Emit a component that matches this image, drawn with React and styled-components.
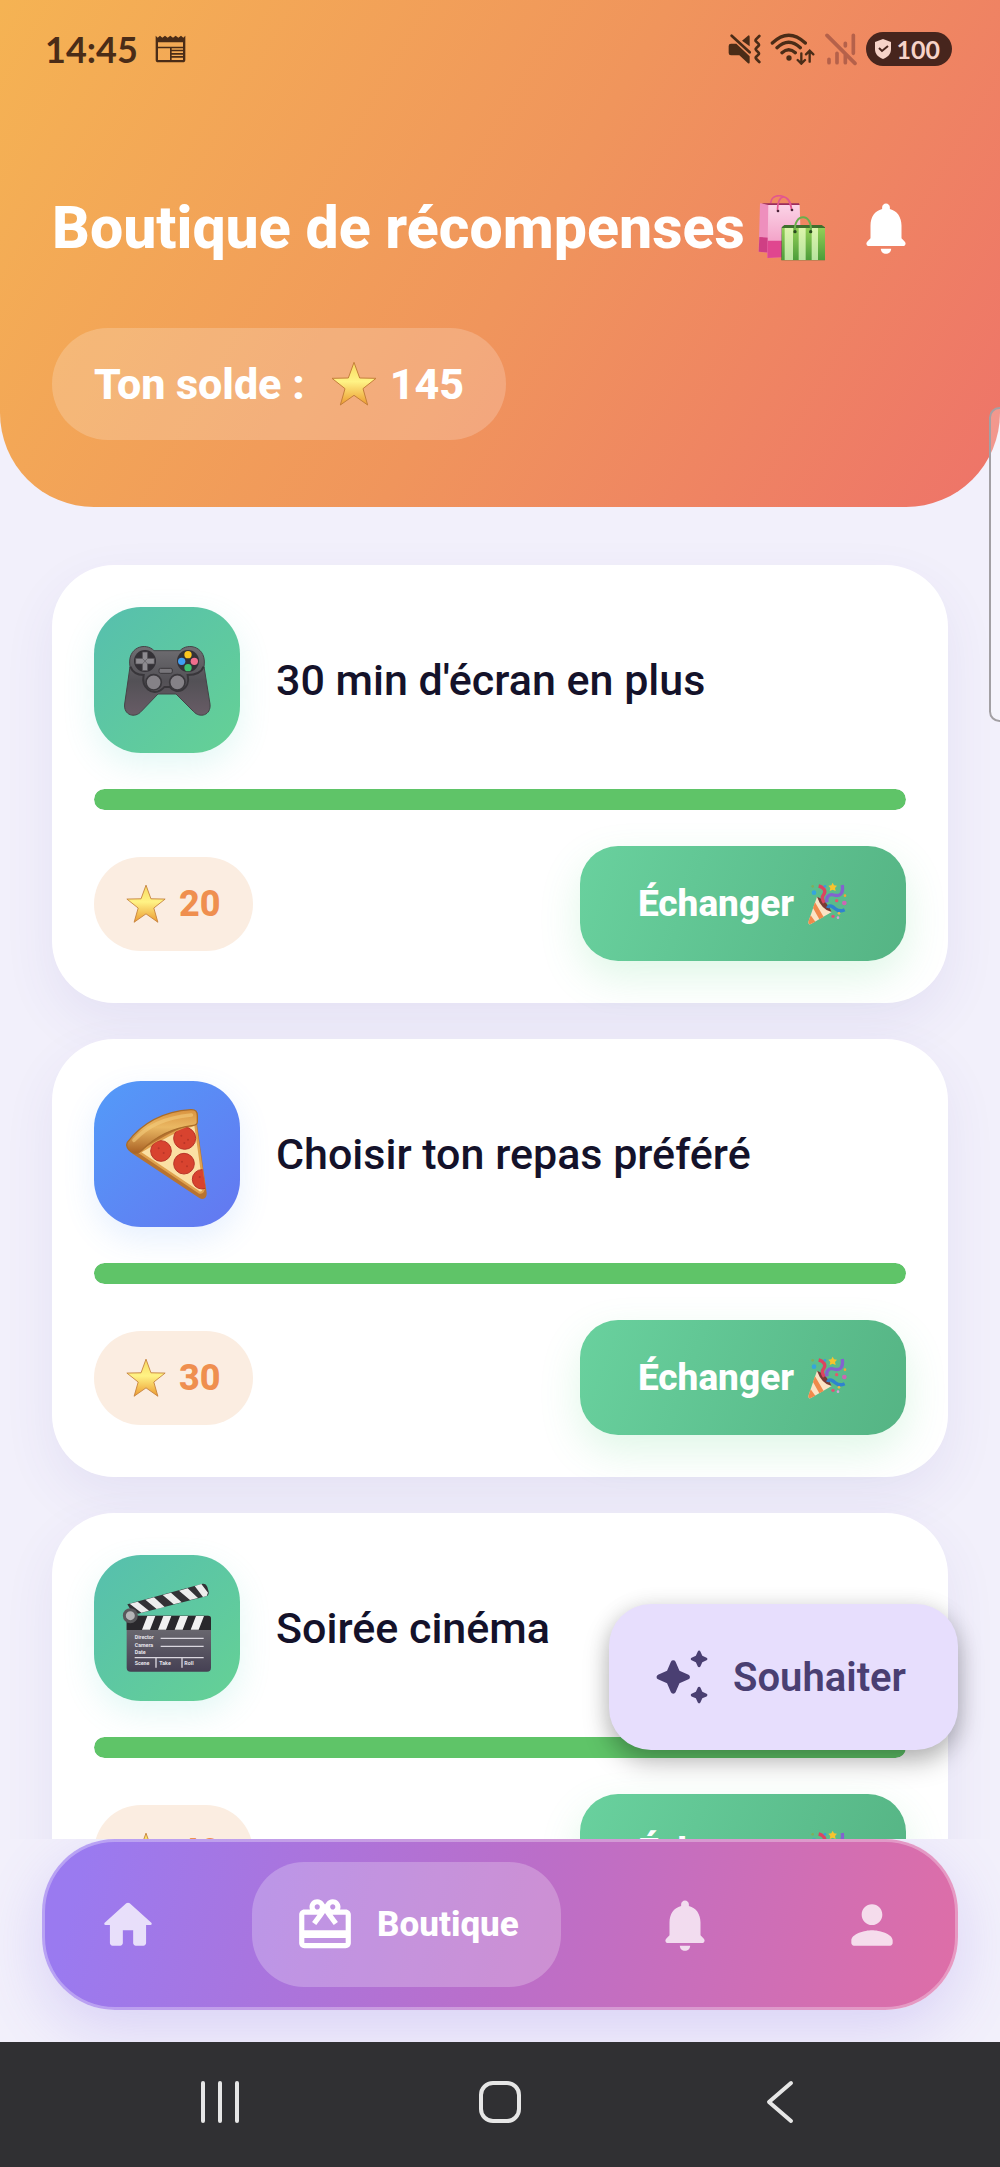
import styled, { createGlobalStyle } from "styled-components";

const GlobalStyle = createGlobalStyle`
  * {
    box-sizing: border-box;
  }

  body {
    margin: 0;
    background: #f2f0fb;
    font-family: Roboto, "Liberation Sans", sans-serif;
  }

  button {
    font-family: inherit;
    border: none;
    cursor: pointer;
  }

  svg {
    display: block;
    flex-shrink: 0;
  }
`;

const Screen = styled.div`
  height: 100vh;
  display: flex;
  flex-direction: column;
  position: relative;
  overflow: hidden;
`;

const Header = styled.header`
  padding: 32px 52px 67px;
  border-radius: 0 0 94px 94px;
  background: linear-gradient(120deg, #f5b353 0%, #f0955c 52%, #ee7369 100%);
`;

const StatusBar = styled.div`
  height: 34px;
  margin: 0 -4px 0 -7px;
  display: flex;
  align-items: center;
  justify-content: space-between;
  color: #4a2c17;
`;

const StatusGroup = styled.div`
  display: flex;
  align-items: center;
  gap: ${({ $gap }) => $gap}px;
`;

const Clock = styled.span`
  font-family: Lato, Roboto, sans-serif;
  font-size: 36px;
  font-weight: 700;
  line-height: 34px;
`;

const Battery = styled.span`
  height: 34px;
  padding: 0 12px 0 8px;
  display: flex;
  align-items: center;
  gap: 4px;
  border-radius: 17px;
  background: #47251d;
  color: #f6d3c8;
  font-family: Lato, Roboto, sans-serif;
  font-size: 25px;
  font-weight: 700;
  line-height: 34px;
`;

const TitleRow = styled.div`
  margin-top: 120px;
  padding-right: 31px;
  display: flex;
  align-items: center;
  justify-content: space-between;
`;

const Title = styled.h1`
  margin: 0;
  display: flex;
  align-items: center;
  gap: 13px;
  font-size: 59px;
  font-weight: 800;
  line-height: 84px;
  color: #fff;
  white-space: nowrap;
`;

const IconButton = styled.button`
  padding: 0;
  background: none;
  color: #fff;
`;

const Balance = styled.div`
  width: fit-content;
  height: 112px;
  margin-top: 58px;
  padding: 0 42px;
  display: flex;
  align-items: center;
  border-radius: 56px;
  background: rgba(255, 255, 255, 0.2);
  color: #fff;
  font-size: 43px;
  font-weight: 800;
  white-space: nowrap;
`;

const BalanceValue = styled.span`
  margin-left: 26px;
  display: flex;
  align-items: center;
  gap: 13px;
`;

const RewardList = styled.ul`
  flex: 1;
  min-height: 0;
  margin: 0;
  padding: 58px 52px;
  display: flex;
  flex-direction: column;
  gap: 36px;
  list-style: none;
  overflow-y: auto;
  scrollbar-width: none;
`;

const Card = styled.li`
  flex-shrink: 0;
  padding: 42px;
  display: flex;
  flex-direction: column;
  gap: 36px;
  border-radius: 62px;
  background: #fff;
  box-shadow: 0 20px 52px rgba(80, 60, 160, 0.08);
`;

const CardHead = styled.div`
  display: flex;
  align-items: center;
  gap: 36px;
`;

const Tile = styled.div`
  width: 146px;
  height: 146px;
  display: flex;
  align-items: center;
  justify-content: center;
  border-radius: 47px;
  background: ${({ $blue }) =>
    $blue
      ? "linear-gradient(135deg, #539bf9, #6477f0)"
      : "linear-gradient(135deg, #56bfae, #65d195)"};
  box-shadow: 0 12px 32px
    ${({ $blue }) =>
      $blue ? "rgba(80, 150, 250, 0.14)" : "rgba(80, 210, 190, 0.16)"};
`;

const RewardName = styled.h2`
  margin: 0;
  font-size: 43px;
  font-weight: 500;
  color: #14122a;
`;

const Track = styled.div`
  height: 21px;
  border-radius: 11px;
  background: #e8e8ee;
  overflow: hidden;
`;

const Fill = styled.div`
  height: 100%;
  border-radius: 11px;
  background: #5fc468;
`;

const CardFoot = styled.div`
  display: flex;
  align-items: center;
  justify-content: space-between;
`;

const Price = styled.span`
  height: 94px;
  padding: 0 32px;
  display: flex;
  align-items: center;
  gap: 13px;
  border-radius: 47px;
  background: #fbede1;
  color: #ef8f4f;
  font-size: 36px;
  font-weight: 800;
`;

const ExchangeButton = styled.button`
  height: 115px;
  padding: 0 58px;
  display: flex;
  align-items: center;
  gap: 13px;
  border-radius: 38px;
  background: linear-gradient(110deg, #69d19e, #55b484);
  box-shadow: 0 16px 40px rgba(80, 210, 120, 0.18);
  color: #fff;
  font-size: 37px;
  font-weight: 800;
`;

const BottomArea = styled.div`
  position: relative;
  padding: 0 42px 32px;
  background: #f2f0fb;
  overflow: hidden;
`;

const NavBar = styled.nav`
  height: 171px;
  padding: 0 20px;
  display: flex;
  align-items: center;
  justify-content: space-between;
  border: 3px solid rgba(255, 255, 255, 0.3);
  border-radius: 73px;
  background: linear-gradient(105deg, #9a7af0 5%, #bb6ec9 52%, #dd6ea8 98%)
    border-box;
  box-shadow: 0 20px 60px rgba(120, 90, 230, 0.2);
`;

const NavItem = styled.a`
  height: 125px;
  padding: ${({ $active }) => ($active ? "0 42px" : "0 32px")};
  display: flex;
  align-items: center;
  gap: 21px;
  border-radius: 52px;
  background: ${({ $active }) =>
    $active ? "rgba(255, 255, 255, 0.24)" : "none"};
  color: ${({ $active }) => ($active ? "#fff" : "rgba(255, 255, 255, 0.76)")};
  font-size: 35px;
  font-weight: 800;
  text-decoration: none;
`;

const WishButton = styled.button`
  position: absolute;
  right: 42px;
  bottom: 417px;
  height: 146px;
  padding: 0 52px 0 41px;
  display: flex;
  align-items: center;
  gap: 21px;
  border-radius: 42px;
  background: #e7defd;
  box-shadow: 0 12px 26px rgba(0, 0, 0, 0.26), 0 2px 22px rgba(0, 0, 0, 0.1);
  color: #4a3f72;
  font-size: 40px;
  font-weight: 600;
`;

const EdgeHandle = styled.div`
  position: absolute;
  top: 407px;
  right: -10px;
  width: 21px;
  height: 315px;
  border: 2px solid #a3a0a4;
  border-radius: 12px;
  background: rgba(255, 255, 255, 0.25);
`;

const SystemBar = styled.div`
  height: 125px;
  padding: 0 190px 5px;
  display: flex;
  align-items: center;
  justify-content: space-between;
  background: #303033;
`;

const SystemButton = styled.button`
  width: 60px;
  height: 60px;
  padding: 0;
  display: flex;
  align-items: center;
  justify-content: center;
  background: none;
  color: #e6e6e6;
`;

const iconPaths = {
  home: "M10 19v-5h4v5c0 .55.45 1 1 1h3c.55 0 1-.45 1-1v-7h1.7c.46 0 .68-.57.33-.87L12.67 3.6c-.38-.34-.96-.34-1.34 0l-8.36 7.53c-.34.3-.13.87.33.87H5v7c0 .55.45 1 1 1h3c.55 0 1-.45 1-1z",
  bell: "M12 22c1.1 0 2-.9 2-2h-4c0 1.1.89 2 2 2zm6-6v-5c0-3.07-1.64-5.64-4.5-6.32V4c0-.83-.67-1.5-1.5-1.5s-1.5.67-1.5 1.5v.68C7.63 5.36 6 7.92 6 11v5l-1.29 1.29c-.63.63-.19 1.71.7 1.71h13.17c.89 0 1.34-1.08.71-1.71L18 16z",
  person:
    "M12 12c2.21 0 4-1.79 4-4s-1.79-4-4-4-4 1.79-4 4 1.79 4 4 4zm0 2c-2.67 0-8 1.34-8 4v1c0 .55.45 1 1 1h14c.55 0 1-.45 1-1v-1c0-2.66-5.33-4-8-4z",
  gift: "M20 6h-2.18c.11-.31.18-.65.18-1 0-1.66-1.34-3-3-3-1.05 0-1.96.54-2.5 1.35l-.5.67-.5-.68C10.96 2.54 10.05 2 9 2 7.34 2 6 3.34 6 5c0 .35.07.69.18 1H4c-1.11 0-1.99.89-1.99 2L2 19c0 1.11.89 2 2 2h16c1.11 0 2-.89 2-2V8c0-1.11-.89-2-2-2zm-5-2c.55 0 1 .45 1 1s-.45 1-1 1-1-.45-1-1 .45-1 1-1zM9 4c.55 0 1 .45 1 1s-.45 1-1 1-1-.45-1-1 .45-1 1-1zm11 15H4v-2h16v2zm0-5H4V8h5.08L7 10.83 8.62 12 11 8.76l1-1.36 1 1.36L15.38 12 17 10.83 14.92 8H20v6z",
  sparkles:
    "M8.1 6.1a1 1 0 0 1 1.8 0l1.5 3.5 3.5 1.5a1 1 0 0 1 0 1.8l-3.5 1.5-1.5 3.5a1 1 0 0 1-1.8 0l-1.5-3.5-3.5-1.5a1 1 0 0 1 0-1.8l3.5-1.5zM18.5 2.1a.55.55 0 0 1 1 0l.75 1.65 1.65.75a.55.55 0 0 1 0 1l-1.65.75-.75 1.65a.55.55 0 0 1-1 0l-.75-1.65-1.65-.75a.55.55 0 0 1 0-1l1.65-.75zM18.5 16.1a.55.55 0 0 1 1 0l.75 1.65 1.65.75a.55.55 0 0 1 0 1l-1.65.75-.75 1.65a.55.55 0 0 1-1 0l-.75-1.65-1.65-.75a.55.55 0 0 1 0-1l1.65-.75z",
};

function Icon({ name }) {
  return (
    <svg width="62" height="62" viewBox="0 0 24 24" fill="currentColor">
      <path d={iconPaths[name]} />
    </svg>
  );
}

function NewsIcon() {
  return (
    <svg width="31" height="28" viewBox="0 0 93 84" fill="currentColor">
      <path
        fillRule="evenodd"
        d="M2 2l6 6 7-6 7 6 8-6 8 6 8-6 8 6 8-6 8 6 8-6 7 6 6-6v72q0 8-8 8H10q-8 0-8-8zM9 22v13h75V22zM9 40v35h36V40zM50 40v4h34v-4zM50 49v5h34v-5zM50 59v4h34v-4zM50 68v7h34v-7z"
      />
    </svg>
  );
}

function MuteIcon() {
  return (
    <svg width="33" height="30" viewBox="82 101 99 90">
      <path
        fill="currentColor"
        d="M84 137q0-7 7-7h16l40 38v18q0 5-5 3l-26-24H91q-7 0-7-7zM124 121l18-15q5-3 5 4v28z"
      />
      <path
        d="M93 106l54 50M176 107l-10 10q-3 4 1 7l6 6q4 4 0 7l-6 6q-4 3 0 7l6 6q4 4 0 7l-6 6q-4 3 0 7l9 9"
        fill="none"
        stroke="currentColor"
        strokeWidth="8"
        strokeLinecap="round"
      />
    </svg>
  );
}

function WifiIcon() {
  return (
    <svg
      width="46"
      height="32"
      viewBox="208 97 138 96"
      fill="none"
      stroke="currentColor"
      strokeWidth="10"
      strokeLinecap="round"
    >
      <path d="M215 127q49-47 99 0M229 141q35-33 70 0M244 156q20-18 40 0" />
      <circle cx="265" cy="172" r="8" fill="currentColor" stroke="none" />
      <path
        d="M302 158v30M291 178l11 11 11-11M327 183v-31M316 161l11-11 11 11"
        strokeWidth="7"
      />
    </svg>
  );
}

function NoSignalIcon() {
  return (
    <svg
      width="32"
      height="33"
      viewBox="372 97 96 99"
      fill="none"
      stroke="#b5614a"
      strokeWidth="11"
      strokeLinecap="round"
    >
      <path d="M384 176v10M408 158v28M433 128v8M433 162v24M457 104v54M378 104l84 84" />
    </svg>
  );
}

function ShieldIcon() {
  return (
    <svg width="18" height="20" viewBox="0 0 18 20">
      <path d="M9 0l8 3v7c0 5-3 8-8 10-5-2-8-5-8-10V3z" fill="#f6d3c8" />
      <path d="M5 9l3 3 6-5" fill="none" stroke="#47251d" strokeWidth="2" />
    </svg>
  );
}

function StarEmoji({ size }) {
  return (
    <svg width={size} height={size} viewBox="0 0 138 138">
      <defs>
        <linearGradient id="star" x1="0" y1="0" x2="0" y2="1">
          <stop offset="0" stopColor="#f7d860" />
          <stop offset="0.45" stopColor="#fff385" />
          <stop offset="1" stopColor="#ec9a30" />
        </linearGradient>
      </defs>
      <path
        d="M69 4l17 47 49 1-39 31 14 49-41-29-41 29 14-49L3 52l49-1z"
        fill="url(#star)"
        stroke="#c47f3a"
        strokeWidth="3"
        strokeLinejoin="round"
      />
    </svg>
  );
}

function BagsEmoji() {
  return (
    <svg width="68" height="66" viewBox="167 74 204 198">
      <defs>
        <linearGradient id="pinkBag" x1="0" y1="0" x2="0" y2="1">
          <stop offset="0" stopColor="#fbd3e6" />
          <stop offset="1" stopColor="#f08dbb" />
        </linearGradient>
        <linearGradient id="greenBag" x1="0" y1="0" x2="0" y2="1">
          <stop offset="0" stopColor="#dcf5ac" />
          <stop offset="1" stopColor="#b8e3a0" />
        </linearGradient>
        <linearGradient id="greenStripe" x1="0" y1="0" x2="0" y2="1">
          <stop offset="0" stopColor="#93cf57" />
          <stop offset="1" stopColor="#4c9d3a" />
        </linearGradient>
      </defs>
      <path d="M173 99l32 4-5 144-31-3z" fill="#ee8fbd" />
      <path d="M171 200l29 2v45l-31-3z" fill="#cf3f84" />
      <path d="M178 99h112l2 6H202z" fill="#9c2c5c" />
      <path d="M198 104h94l2 62-52 4-3 90-44 3z" fill="url(#pinkBag)" />
      <path d="M196 211h43v50l-44 2z" fill="#e0468f" />
      <path
        d="M205 98c2-30 48-29 58 2l6 20M226 122c-4-55 38-56 42-2"
        fill="none"
        stroke="#e2568f"
        strokeWidth="5"
      />
      <path d="M238 171l8-7h112l10 7v99H237z" fill="#406f2e" />
      <path d="M239 173h129v96H239z" fill="url(#greenBag)" />
      <path
        d="M239 173h8v96h-8zM272 173h17v96h-17zM310 173h18v96h-18zM347 173h21v96h-21z"
        fill="url(#greenStripe)"
      />
      <path
        d="M278 186c-6-60 55-60 47 0"
        fill="none"
        stroke="#6aae4c"
        strokeWidth="6"
      />
      <g fill="#4c2339">
        <circle cx="227" cy="122" r="4" />
        <circle cx="269" cy="119" r="4" />
      </g>
      <g fill="#29491d">
        <circle cx="278" cy="184" r="5" />
        <circle cx="325" cy="184" r="5" />
      </g>
    </svg>
  );
}

function GamepadEmoji() {
  return (
    <svg width="88" height="72" viewBox="126 164 264 216">
      <defs>
        <linearGradient id="padBody" x1="0" y1="0" x2="0" y2="1">
          <stop offset="0" stopColor="#6f6e72" />
          <stop offset="0.5" stopColor="#535156" />
          <stop offset="1" stopColor="#685c66" />
        </linearGradient>
      </defs>
      <path
        d="M147 232c-10-60 48-74 72-48h78c24-26 82-12 72 48l18 112c4 34-31 44-50 22l-52-52h-54l-50 52c-19 22-54 12-50-22z"
        fill="url(#padBody)"
        stroke="#454347"
        strokeWidth="3"
      />
      <path
        d="M148 232c8 20 24 25 40 25-8 40 26 60 50 46q8-5 12-10h16c20 26 64 8 54-36 20 0 40-5 48-25"
        fill="none"
        stroke="#38363a"
        strokeWidth="6"
      />
      <circle cx="192" cy="215" r="33" fill="#343237" />
      <circle cx="321" cy="215" r="33" fill="#343237" />
      <path
        d="M184 188h16v19h20v17h-20v20h-16v-20h-20v-17h20z"
        fill="#8d8b90"
        stroke="#4c4a4f"
        strokeWidth="2"
      />
      <path d="M184 207l16 17M200 207l-16 17" stroke="#59575c" strokeWidth="2" />
      <circle cx="321" cy="196" r="11" fill="#fbc51e" />
      <circle cx="302" cy="216" r="11" fill="#3f9ff2" />
      <circle cx="340" cy="216" r="11" fill="#ef6f8d" />
      <circle cx="321" cy="235" r="11" fill="#3fc06c" />
      <rect
        x="234"
        y="237"
        width="40"
        height="15"
        rx="5"
        fill="#77757a"
        stroke="#3a383c"
        strokeWidth="3"
      />
      <g fill="#858287" stroke="#3a383c" strokeWidth="5">
        <circle cx="218" cy="279" r="23" />
        <circle cx="289" cy="279" r="23" />
      </g>
    </svg>
  );
}

function PizzaEmoji() {
  return (
    <svg width="84" height="93" viewBox="129 145 252 279">
      <defs>
        <linearGradient id="crust" x1="0" y1="0" x2="0" y2="1">
          <stop offset="0" stopColor="#d9923f" />
          <stop offset="0.4" stopColor="#eab863" />
          <stop offset="1" stopColor="#a85f22" />
        </linearGradient>
        <clipPath id="slice">
          <path d="M172 278c52-30 100-64 168-84l30 186c1 12-5 22-15 18z" />
        </clipPath>
      </defs>
      <path
        d="M143 266l200-88 31 222c1 13-9 23-22 15L152 282z"
        fill="#b87330"
      />
      <path
        d="M172 278c52-30 100-64 168-84l26 186c1 12-5 22-15 18z"
        fill="#fbe0a4"
        stroke="#dfa14e"
        strokeWidth="7"
      />
      <g clipPath="url(#slice)">
        <g fill="#d8432f" stroke="#b8362a" strokeWidth="3">
          <circle cx="308" cy="236" r="33" />
          <circle cx="237" cy="274" r="31" />
          <circle cx="306" cy="312" r="31" />
          <circle cx="360" cy="359" r="29" />
        </g>
        <g fill="#b93528">
          <circle cx="298" cy="228" r="3" />
          <circle cx="318" cy="240" r="3" />
          <circle cx="307" cy="250" r="3" />
          <circle cx="230" cy="266" r="3" />
          <circle cx="245" cy="280" r="3" />
          <circle cx="300" cy="306" r="3" />
          <circle cx="315" cy="320" r="3" />
          <circle cx="353" cy="352" r="3" />
        </g>
      </g>
      <path
        d="M136 248c42-54 100-92 190-98 16-1 20 7 20 18v18c0 8-4 10-12 11-68 8-116 36-156 76-8 9-18 12-30 4-11-7-17-20-12-29z"
        fill="url(#crust)"
        stroke="#a96c2a"
        strokeWidth="4"
      />
      <path
        d="M156 242c40-42 90-68 172-76"
        fill="none"
        stroke="#f3cb7c"
        strokeWidth="11"
        strokeLinecap="round"
        opacity="0.6"
      />
    </svg>
  );
}

function ClapperEmoji() {
  return (
    <svg width="90" height="90" viewBox="124 160 270 270">
      <defs>
        <linearGradient id="slate" x1="0" y1="0" x2="0" y2="1">
          <stop offset="0" stopColor="#747377" />
          <stop offset="1" stopColor="#454053" />
        </linearGradient>
      </defs>
      <path
        d="M140 224l226-62q10-1 14 10l4 14q2 10-8 14l-204 52q-10-10-20-8z"
        fill="#333236"
      />
      <path
        d="M147 222l24-6 34 27-23 6zM194 210l26-7 32 29-24 6zM246 196l25-7 32 29-24 6zM295 183l26-7 31 29-24 6zM342 169l20-6 20 26-4 10-11 3z"
        fill="#ededed"
      />
      <path
        d="M138 258h244q9 0 9 9v147q0 12-12 12H150q-12 0-12-12z"
        fill="url(#slate)"
      />
      <path d="M138 258h244q9 0 9 9v34H138z" fill="#29282c" />
      <path
        d="M200 259h24l-16 41h-24zM248 259h24l-16 41h-24zM298 259h24l-16 41h-24zM346 259h24l-16 41h-24z"
        fill="#f1f1f1"
      />
      <circle
        cx="149"
        cy="258"
        r="18"
        fill="#b5b5b7"
        stroke="#59595c"
        strokeWidth="9"
      />
      <path
        d="M240 326h129M240 350h129M162 384h207M226 384v30M304 384v30"
        stroke="#dad7df"
        strokeWidth="4"
      />
      <g
        fill="#e6e3ea"
        fontFamily="Roboto, sans-serif"
        fontSize="16"
        fontWeight="700"
      >
        <text x="162" y="327">
          Director
        </text>
        <text x="162" y="351">
          Camera
        </text>
        <text x="162" y="374">
          Date
        </text>
        <text x="162" y="406">
          Scene
        </text>
        <text x="236" y="406">
          Take
        </text>
        <text x="311" y="406">
          Roll
        </text>
      </g>
    </svg>
  );
}

function PartyEmoji() {
  return (
    <svg width="41" height="43" viewBox="740 190 123 129">
      <path d="M770 234l44 46-62 36q-9 4-8-6z" fill="#fbe3c4" />
      <path
        d="M764 251l26 44-13 7-19-34zM751 290l14 19-14 7q-8 2-7-6z"
        fill="#f08a4b"
      />
      <path d="M770 234q28 9 44 46-30-6-44-46z" fill="#7a3a35" />
      <path
        d="M775 202c18 4 22 18 15 26s-4 16 2 24"
        fill="none"
        stroke="#dc4560"
        strokeWidth="10"
      />
      <path
        d="M846 199c4 32-12 34-26 30s-24 6-20 22"
        fill="none"
        stroke="#8363cf"
        strokeWidth="10"
      />
      <path
        d="M802 268c4-14 18-2 24 3s17 7 27 2"
        fill="none"
        stroke="#2f83cf"
        strokeWidth="10"
      />
      <path
        d="M817 192l4 8 9 1-6 7 2 9-9-4-9 4 2-9-6-7 9-1z"
        fill="#f8c42d"
      />
      <circle cx="761" cy="222" r="7" fill="#35a6dd" />
      <circle cx="794" cy="203" r="4" fill="#3a9bdc" />
      <circle cx="829" cy="246" r="5" fill="#e5556e" />
      <circle cx="852" cy="253" r="7" fill="#cc67b5" />
      <circle cx="854" cy="231" r="4" fill="#f3a932" />
      <circle cx="757" cy="203" r="4" fill="#7fae5c" />
      <circle cx="818" cy="293" r="5" fill="#e34f76" />
      <circle cx="833" cy="297" r="4" fill="#d9a0d8" />
      <circle cx="836" cy="284" r="4" fill="#efb34a" />
    </svg>
  );
}

const rewards = [
  { name: "30 min d'écran en plus", price: 20, emoji: <GamepadEmoji /> },
  { name: "Choisir ton repas préféré", price: 30, emoji: <PizzaEmoji />, blue: true },
  { name: "Soirée cinéma", price: 40, emoji: <ClapperEmoji /> },
];

const balance = 145;

function RewardCard({ reward }) {
  const progress = Math.min(100, (balance / reward.price) * 100);

  return (
    <Card>
      <CardHead>
        <Tile $blue={reward.blue}>{reward.emoji}</Tile>
        <RewardName>{reward.name}</RewardName>
      </CardHead>
      <Track role="progressbar" aria-label={reward.name} aria-valuenow={progress}>
        <Fill style={{ width: `${progress}%` }} />
      </Track>
      <CardFoot>
        <Price>
          <StarEmoji size={40} />
          {reward.price}
        </Price>
        <ExchangeButton type="button">
          Échanger
          <PartyEmoji />
        </ExchangeButton>
      </CardFoot>
    </Card>
  );
}

function App() {
  return (
    <>
      <GlobalStyle />
      <Screen>
        <Header>
          <StatusBar>
            <StatusGroup $gap={17}>
              <Clock>14:45</Clock>
              <NewsIcon />
            </StatusGroup>
            <StatusGroup $gap={9}>
              <MuteIcon />
              <WifiIcon />
              <NoSignalIcon />
              <Battery>
                <ShieldIcon />
                100
              </Battery>
            </StatusGroup>
          </StatusBar>
          <TitleRow>
            <Title>
              Boutique de récompenses
              <BagsEmoji />
            </Title>
            <IconButton type="button" aria-label="Notifications">
              <Icon name="bell" />
            </IconButton>
          </TitleRow>
          <Balance>
            Ton solde :
            <BalanceValue>
              <StarEmoji size={46} />
              {balance}
            </BalanceValue>
          </Balance>
        </Header>

        <RewardList>
          {rewards.map((reward) => (
            <RewardCard key={reward.name} reward={reward} />
          ))}
        </RewardList>

        <BottomArea>
          <NavBar>
            <NavItem href="#accueil" aria-label="Accueil">
              <Icon name="home" />
            </NavItem>
            <NavItem href="#boutique" $active>
              <Icon name="gift" />
              Boutique
            </NavItem>
            <NavItem href="#notifications" aria-label="Notifications">
              <Icon name="bell" />
            </NavItem>
            <NavItem href="#profil" aria-label="Profil">
              <Icon name="person" />
            </NavItem>
          </NavBar>
        </BottomArea>

        <SystemBar>
          <SystemButton type="button" aria-label="Applications récentes">
            <svg width="40" height="42" viewBox="0 0 40 42">
              <path
                d="M3 2v38M20 2v38M37 2v38"
                stroke="currentColor"
                strokeWidth="4"
                strokeLinecap="round"
              />
            </svg>
          </SystemButton>
          <SystemButton type="button" aria-label="Écran d'accueil">
            <svg width="44" height="44" viewBox="0 0 44 44">
              <rect
                x="3"
                y="3"
                width="38"
                height="38"
                rx="12"
                fill="none"
                stroke="currentColor"
                strokeWidth="4"
              />
            </svg>
          </SystemButton>
          <SystemButton type="button" aria-label="Retour">
            <svg width="28" height="44" viewBox="0 0 28 44">
              <path
                d="M25 3L3 22l22 19"
                fill="none"
                stroke="currentColor"
                strokeWidth="4"
                strokeLinecap="round"
                strokeLinejoin="round"
              />
            </svg>
          </SystemButton>
        </SystemBar>

        <WishButton type="button">
          <Icon name="sparkles" />
          Souhaiter
        </WishButton>
        <EdgeHandle />
      </Screen>
    </>
  );
}

export default App;
